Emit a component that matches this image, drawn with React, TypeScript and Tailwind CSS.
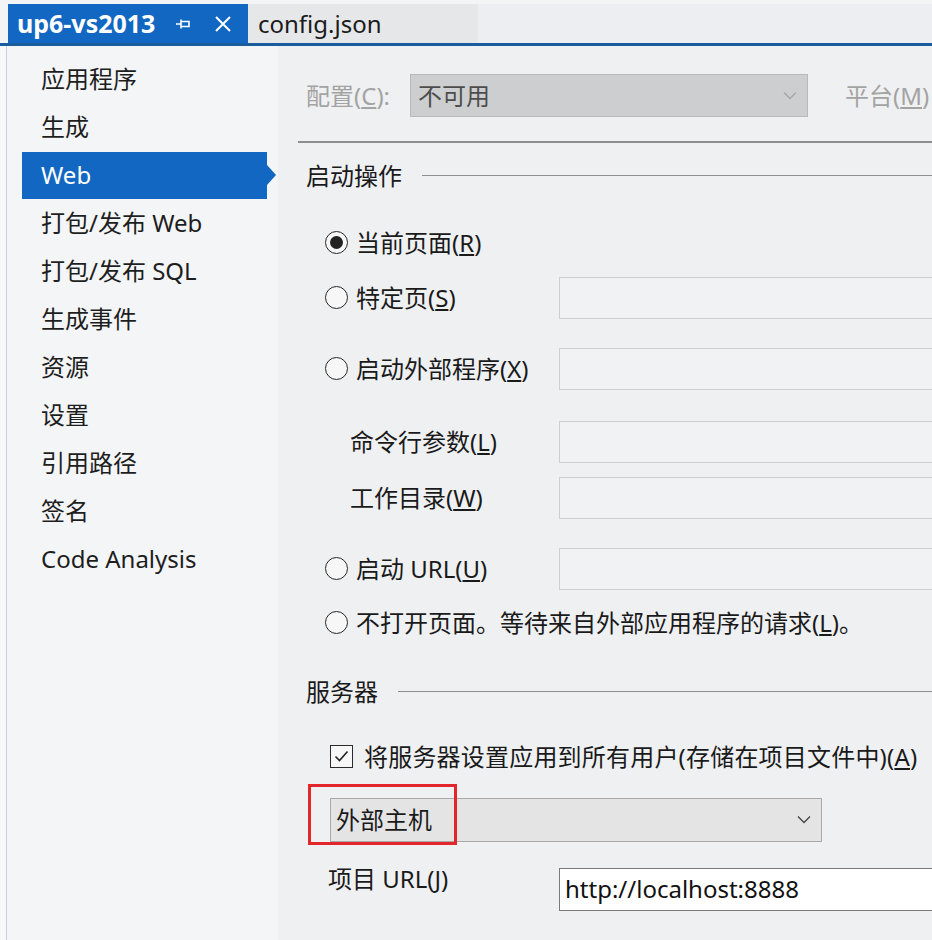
import React from 'react';

const sideItems = [
  '应用程序',
  '生成',
  'Web',
  '打包/发布 Web',
  '打包/发布 SQL',
  '生成事件',
  '资源',
  '设置',
  '引用路径',
  '签名',
  'Code Analysis',
];

function Radio({ checked }: { checked?: boolean }) {
  return (
    <span className="flex h-[23px] w-[23px] shrink-0 items-center justify-center rounded-full border-[1.7px] border-[#262626] bg-[#f7f7f7]">
      {checked && <span className="h-[13px] w-[13px] rounded-full bg-[#222]" />}
    </span>
  );
}

function Chevron({ color }: { color: string }) {
  return (
    <svg width="14" height="9" viewBox="0 0 14 9" fill="none">
      <path d="M1 1.5 L7 7.5 L13 1.5" stroke={color} strokeWidth="1.3" />
    </svg>
  );
}

function TextBox() {
  return <div className="h-[42px] flex-1 -mr-[6px] border border-[#cfcfcf] bg-[#f1f2f4]" />;
}

function Header({ title }: { title: string }) {
  return (
    <div className="flex h-[34px] items-center">
      <span className="text-[#1a1a1a]">{title}</span>
      <div className="ml-[20px] h-[1.5px] flex-1 bg-[#8e8e8e]" />
    </div>
  );
}

export default function App() {
  return (
    <div className="relative h-[940px] w-[932px] overflow-hidden bg-[#f3f4f6] font-['Noto_Sans','Noto_Sans_CJK_SC',sans-serif] text-[24px] leading-none">
      {/* tab strip */}
      <div className="flex h-[46px] border-b-[3px] border-[#1a5d9f] bg-[#f3f4f6] pl-[8px] pt-[4px]">
        <div className="flex w-[240px] items-center bg-[#1267c2] pl-[9px] text-white">
          <span className="text-[25px] font-bold">up6-vs2013</span>
          <svg className="ml-[20px]" width="17" height="16" viewBox="0 0 17 16" fill="none">
            <path d="M1 8 H6 M6 3.5 V12.5 M6 5.5 H14 V10.5 H6" stroke="white" strokeWidth="1.6" />
          </svg>
          <svg className="ml-[22px]" width="18" height="18" viewBox="0 0 18 18" fill="none">
            <path d="M2 2 L16 16 M16 2 L2 16" stroke="white" strokeWidth="2" />
          </svg>
        </div>
        <div className="flex w-[230px] items-center bg-[#e6e7e9] pl-[10px] text-[#1b1b1b]">config.json</div>
        <div className="flex-1 bg-[#eceef2]" />
      </div>

      <div className="flex h-[894px]">
        <div className="w-[7px] border-r border-[#c9cfdc] bg-[#f7f8fa]" />
        {/* sidebar */}
        <div className="w-[271px] bg-[#f4f5f7] pt-[9px]">
          {sideItems.map((item) =>
            item === 'Web' ? (
              <div key={item} className="ml-[15px] flex h-[48px] items-center">
                <div className="flex h-[47px] w-[245px] items-center bg-[#1267c2] pl-[19px] text-white">{item}</div>
                <div className="h-0 w-0 border-y-[10px] border-l-[9px] border-y-transparent border-l-[#1267c2]" />
              </div>
            ) : (
              <div key={item} className="flex h-[48px] items-center pl-[34px] text-[#1e1e1e]">
                {item}
              </div>
            )
          )}
        </div>

        {/* main panel */}
        <div className="flex flex-1 flex-col overflow-hidden bg-[#eff0f2] pl-[20px] pt-[28px] text-[#1a1a1a]">
          <div className="flex h-[43px] items-center pl-[8px]">
            <span className="w-[104px] text-[#a3a3a3]">
              配置(<u className="underline-offset-2">C</u>):
            </span>
            <div className="flex h-[43px] w-[398px] items-center justify-between border border-[#b9b9b9] bg-[#cdcecf] pl-[7px] pr-[10px] text-[#4d4d4d]">
              <span>不可用</span>
              <Chevron color="#a6a6a6" />
            </div>
            <span className="ml-[37px] whitespace-nowrap text-[#a3a3a3]">
              平台(<u className="underline-offset-2">M</u>)
            </span>
          </div>

          <div className="mt-[24px] h-[1.5px] bg-[#8e8e8e]" />

          <div className="mt-[16px] pl-[8px]">
            <Header title="启动操作" />
          </div>

          <div className="mt-[29px] flex h-[42px] items-center pl-[27px]">
            <Radio checked />
            <span className="ml-[8px]">
              当前页面(<u className="underline-offset-2">R</u>)
            </span>
          </div>

          <div className="mt-[13px] flex h-[42px] items-center pl-[27px]">
            <div className="flex w-[234px] items-center">
              <Radio />
              <span className="ml-[8px]">
                特定页(<u className="underline-offset-2">S</u>)
              </span>
            </div>
            <TextBox />
          </div>

          <div className="mt-[29px] flex h-[42px] items-center pl-[27px]">
            <div className="flex w-[234px] items-center">
              <Radio />
              <span className="ml-[8px]">
                启动外部程序(<u className="underline-offset-2">X</u>)
              </span>
            </div>
            <TextBox />
          </div>

          <div className="mt-[31px] flex h-[42px] items-center pl-[27px]">
            <div className="w-[234px] pl-[25px]">
              命令行参数(<u className="underline-offset-2">L</u>)
            </div>
            <TextBox />
          </div>

          <div className="mt-[14px] flex h-[42px] items-center pl-[27px]">
            <div className="w-[234px] pl-[25px]">
              工作目录(<u className="underline-offset-2">W</u>)
            </div>
            <TextBox />
          </div>

          <div className="mt-[29px] flex h-[42px] items-center pl-[27px]">
            <div className="flex w-[234px] items-center">
              <Radio />
              <span className="ml-[8px]">
                启动 URL(<u className="underline-offset-2">U</u>)
              </span>
            </div>
            <TextBox />
          </div>

          <div className="mt-[12px] flex h-[42px] items-center whitespace-nowrap pl-[27px]">
            <Radio />
            <span className="ml-[8px]">
              不打开页面。等待来自外部应用程序的请求(<u className="underline-offset-2">L</u>)。
            </span>
          </div>

          <div className="mt-[31px] pl-[8px]">
            <Header title="服务器" />
          </div>

          <div className="mt-[27px] flex h-[42px] items-center whitespace-nowrap pl-[32px]">
            <span className="flex h-[23px] w-[23px] shrink-0 items-center justify-center border-[1.5px] border-[#2b2b2b] bg-[#f7f7f7]">
              <svg width="15" height="13" viewBox="0 0 15 13" fill="none">
                <path d="M1.5 6.5 L5.5 10.5 L13.5 1.5" stroke="#222" strokeWidth="1.6" />
              </svg>
            </span>
            <span className="ml-[11px] tracking-[0.2px]">
              将服务器设置应用到所有用户(存储在项目文件中)(<u className="underline-offset-2">A</u>)
            </span>
          </div>

          <div className="relative ml-[32px] mt-[20px] flex h-[44px] w-[492px] items-center justify-between border border-[#a9a9a9] bg-[#e4e4e4] pl-[5px] pr-[10px]">
            <span>外部主机</span>
            <Chevron color="#444" />
            <div className="absolute -left-[23px] -top-[15px] h-[61px] w-[149px] border-[3px] border-[#e3262b]" />
          </div>

          <div className="mt-[26px] flex h-[43px] items-start pl-[30px]">
            <div className="flex h-[22px] w-[231px] items-center whitespace-nowrap">
              项目 URL(<u className="underline-offset-2">J</u>)
            </div>
            <div className="flex h-[43px] flex-1 -mr-[6px] items-center border border-[#7a7a7a] bg-white pl-[5px] text-[#111]">
              http://localhost:8888
            </div>
          </div>
        </div>
      </div>
    </div>
  );
}
